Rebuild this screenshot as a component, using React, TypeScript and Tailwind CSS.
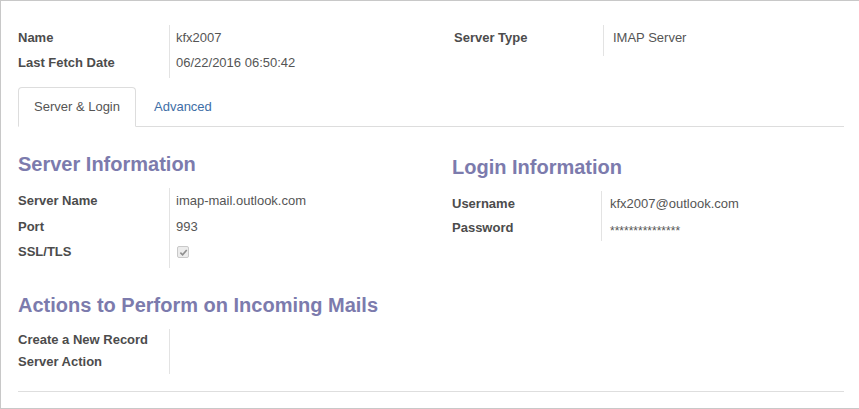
import React from 'react'

// Fetchmail server form (Odoo style), read-only view

const font = { fontFamily: '"Liberation Sans", Arial, Helvetica, sans-serif' }

type Row = { label: string; value?: React.ReactNode; h: string }

function FieldTable({ rows, labelW, valuePad, sepPad }: { rows: Row[]; labelW: string; valuePad: string; sepPad: string }) {
  return (
    <div className="flex">
      <div className={`${labelW} flex flex-col ${sepPad}`}>
        {rows.map((r) => (
          <div key={r.label} className={`${r.h} flex items-center text-[13px] font-bold text-[#4c4c4c] whitespace-nowrap`}>
            {r.label}
          </div>
        ))}
      </div>
      <div className={`flex flex-col border-l border-[#e3e3e3] ${valuePad} ${sepPad}`}>
        {rows.map((r) => (
          <div key={r.label} className={`${r.h} flex items-center text-[13px] text-[#555555] whitespace-nowrap`}>
            {r.value}
          </div>
        ))}
      </div>
    </div>
  )
}

function Checked() {
  return (
    <span className="mt-[1px] ml-[1px] w-[12px] h-[12px] rounded-[2px] border border-[#c9c9c9] bg-[#ececec] flex items-center justify-center">
      <svg width="9" height="9" viewBox="0 0 10 10">
        <path d="M1.5 5.2 L4 7.6 L8.6 2.2" fill="none" stroke="#8f8f8f" strokeWidth="1.8" />
      </svg>
    </span>
  )
}

export default function App() {
  return (
    <div style={font} className="w-[859px] h-[409px] bg-white border-l border-t border-b border-[#c8c8c8] pl-[17px] pr-[15px] pt-[24px]">
      {/* header fields */}
      <div className="flex">
        <div className="w-[434px]">
          <FieldTable
            labelW="w-[151px]"
            valuePad="pl-[6px]"
            sepPad="pb-[3px]"
            rows={[
              { label: 'Name', value: 'kfx2007', h: 'h-[25px]' },
              { label: 'Last Fetch Date', value: '06/22/2016 06:50:42', h: 'h-[25px]' },
            ]}
          />
        </div>
        <div className="pl-[2px]">
          <FieldTable
            labelW="w-[149px]"
            valuePad="pl-[9px]"
            sepPad="pb-[6px]"
            rows={[{ label: 'Server Type', value: 'IMAP Server', h: 'h-[25px]' }]}
          />
        </div>
      </div>

      {/* tabs */}
      <div className="mt-[9px] flex border-b border-[#dddddd] text-[13px]">
        <div className="-mb-px px-[15px] h-[40px] flex items-center bg-white border border-[#dddddd] border-b-white rounded-t-[4px] text-[#555555]">
          Server &amp; Login
        </div>
        <div className="ml-[2px] px-[16px] h-[39px] flex items-center text-[#3e6ea6]">Advanced</div>
      </div>

      {/* page content */}
      <div className="flex">
        <div className="w-[434px]">
          <h2 className="mt-[25px] h-[24px] leading-[24px] text-[20px] font-bold text-[#7c7bad]">Server Information</h2>
          <div className="mt-[12px]">
            <FieldTable
              labelW="w-[151px]"
              valuePad="pl-[6px]"
              sepPad="pb-[4px]"
              rows={[
                { label: 'Server Name', value: 'imap-mail.outlook.com', h: 'h-[26px]' },
                { label: 'Port', value: '993', h: 'h-[25px]' },
                { label: 'SSL/TLS', value: <Checked />, h: 'h-[25px]' },
              ]}
            />
          </div>
        </div>
        <div>
          <h2 className="mt-[28px] h-[24px] leading-[24px] text-[20px] font-bold text-[#7c7bad]">Login Information</h2>
          <div className="mt-[12px]">
            <FieldTable
              labelW="w-[149px]"
              valuePad="pl-[8px]"
              sepPad="pb-[1px]"
              rows={[
                { label: 'Username', value: 'kfx2007@outlook.com', h: 'h-[25px]' },
                { label: 'Password', value: <span className="text-[12px] mt-[6px]">***************</span>, h: 'h-[24px]' },
              ]}
            />
          </div>
        </div>
      </div>

      <h2 className="mt-[25px] h-[24px] leading-[24px] text-[20px] font-bold text-[#7c7bad]">Actions to Perform on Incoming Mails</h2>
      <div className="mt-[12px]">
        <FieldTable
          labelW="w-[151px]"
          valuePad="pl-[6px]"
          sepPad="pb-[1px]"
          rows={[
            { label: 'Create a New Record', h: 'h-[22px]' },
            { label: 'Server Action', h: 'h-[22px]' },
          ]}
        />
      </div>

      <div className="mt-[17px] border-t border-[#dedede]" />
    </div>
  )
}
